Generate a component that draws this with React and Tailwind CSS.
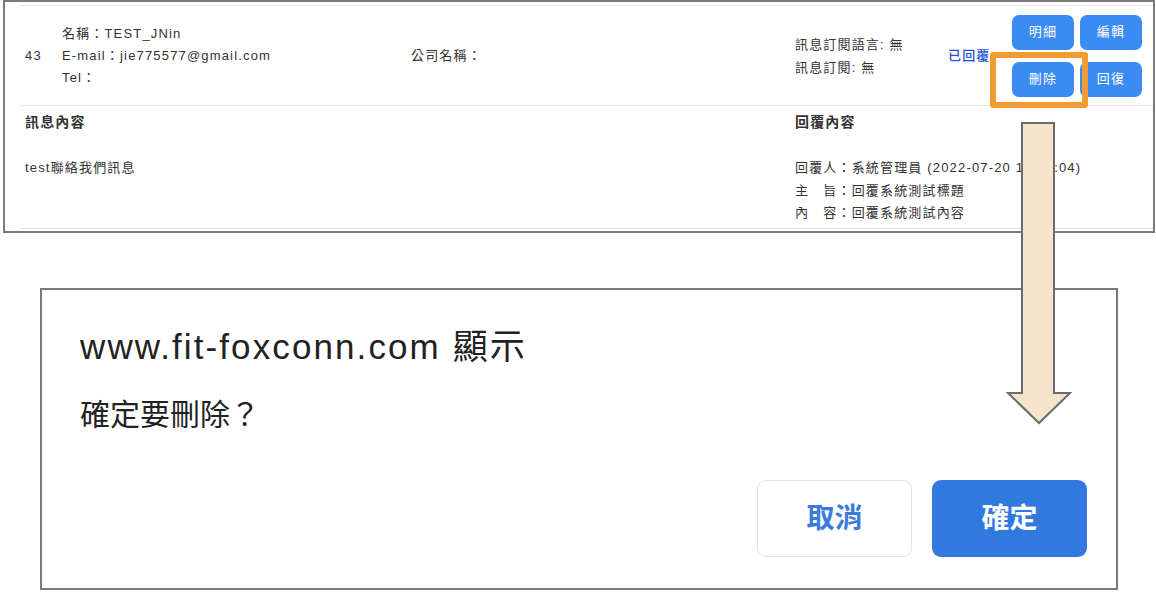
import React from 'react';

const FONT = { fontFamily: '"Liberation Sans", "Noto Sans CJK TC", sans-serif' };

function SmallBtn({ label }) {
    return (
        <button className="w-[62px] h-[35px] rounded-[7px] bg-[#3b8cf2] text-white text-[13px] tracking-[0.1em]">
            {label}
        </button>
    );
}

function Arrow() {
    // beige down arrow that points from the 刪除 button to the dialog
    return (
        <svg className="absolute left-[1005px] top-[120px]" width="68" height="306" viewBox="0 0 68 306">
            <path d="M17 3 H49 V273 H65 L34 303 L3 273 H17 Z" fill="#f6e4cd" stroke="#6b6b6b" strokeWidth="2" strokeLinejoin="miter" />
        </svg>
    );
}

export default function App() {
    return (
        <div className="relative w-[1156px] h-[594px] bg-white overflow-hidden text-[#333]" style={FONT}>
            {/* message row */}
            <div className="ml-[3px] w-[1152px] h-[233px] border-2 border-[#7a7a7a] pt-[3px] pl-[15px]">
                <div className="border-t border-[#e6e6e6]">
                    <div className="flex items-center h-[100px] border-b border-[#e2e2e2] text-[13px] tracking-[0.09em]">
                        <div className="w-[42px] pl-[5px]">43</div>
                        <div className="w-[349px] leading-[22px]">
                            <div>名稱：TEST_JNin</div>
                            <div>E-mail：jie775577@gmail.com</div>
                            <div>Tel：</div>
                        </div>
                        <div className="w-[384px]">公司名稱：</div>
                        <div className="w-[153px] leading-[23px]">
                            <div>訊息訂閱語言: 無</div>
                            <div>訊息訂閱: 無</div>
                        </div>
                        <div className="w-[60px] text-[#2450e0] font-medium">已回覆</div>
                        <div className="pl-[4px] grid grid-cols-2 gap-x-[6px] gap-y-[12px]">
                            <SmallBtn label="明細" />
                            <SmallBtn label="編輯" />
                            <SmallBtn label="刪除" />
                            <SmallBtn label="回復" />
                        </div>
                    </div>
                    <div className="flex h-[123px] border-b border-[#e2e2e2] text-[13px] tracking-[0.09em]">
                        <div className="w-[770px] pl-[5px] pt-[6px]">
                            <div className="text-[14px] font-bold leading-[20px]">訊息內容</div>
                            <div className="mt-[25px] leading-[22px]">test聯絡我們訊息</div>
                        </div>
                        <div className="pl-[5px] pt-[6px]">
                            <div className="text-[14px] font-bold leading-[20px]">回覆內容</div>
                            <div className="mt-[25px] leading-[22.5px]">
                                <div>回覆人：系統管理員 (2022-07-20 14:36:04)</div>
                                <div>主　旨：回覆系統測試標題</div>
                                <div>內　容：回覆系統測試內容</div>
                            </div>
                        </div>
                    </div>
                </div>
            </div>

            {/* browser confirm dialog */}
            <div className="ml-[40px] mt-[55px] w-[1078px] h-[302px] border-2 border-[#7a7a7a] pt-[37px] pl-[38px] pr-[29px] flex flex-col">
                <div className="text-[35px] leading-[40px] tracking-[0.06em] text-[#222]">www.fit-foxconn.com 顯示</div>
                <div className="mt-[30px] text-[30px] leading-[36px] text-[#222]">確定要刪除？</div>
                <div className="mt-[47px] flex justify-end gap-[20px]">
                    <button className="w-[155px] h-[77px] rounded-[9px] border border-[#e3e3e3] bg-white text-[#3a7bdc] text-[28px] font-bold">
                        取消
                    </button>
                    <button className="w-[155px] h-[77px] rounded-[9px] bg-[#3178df] text-white text-[28px] font-bold">
                        確定
                    </button>
                </div>
            </div>

            {/* highlight box around 刪除 */}
            <div className="absolute left-[990px] top-[52px] w-[98px] h-[56px] border-[6px] border-[#f29b35] rounded-[3px]" />
            <Arrow />
        </div>
    );
}
